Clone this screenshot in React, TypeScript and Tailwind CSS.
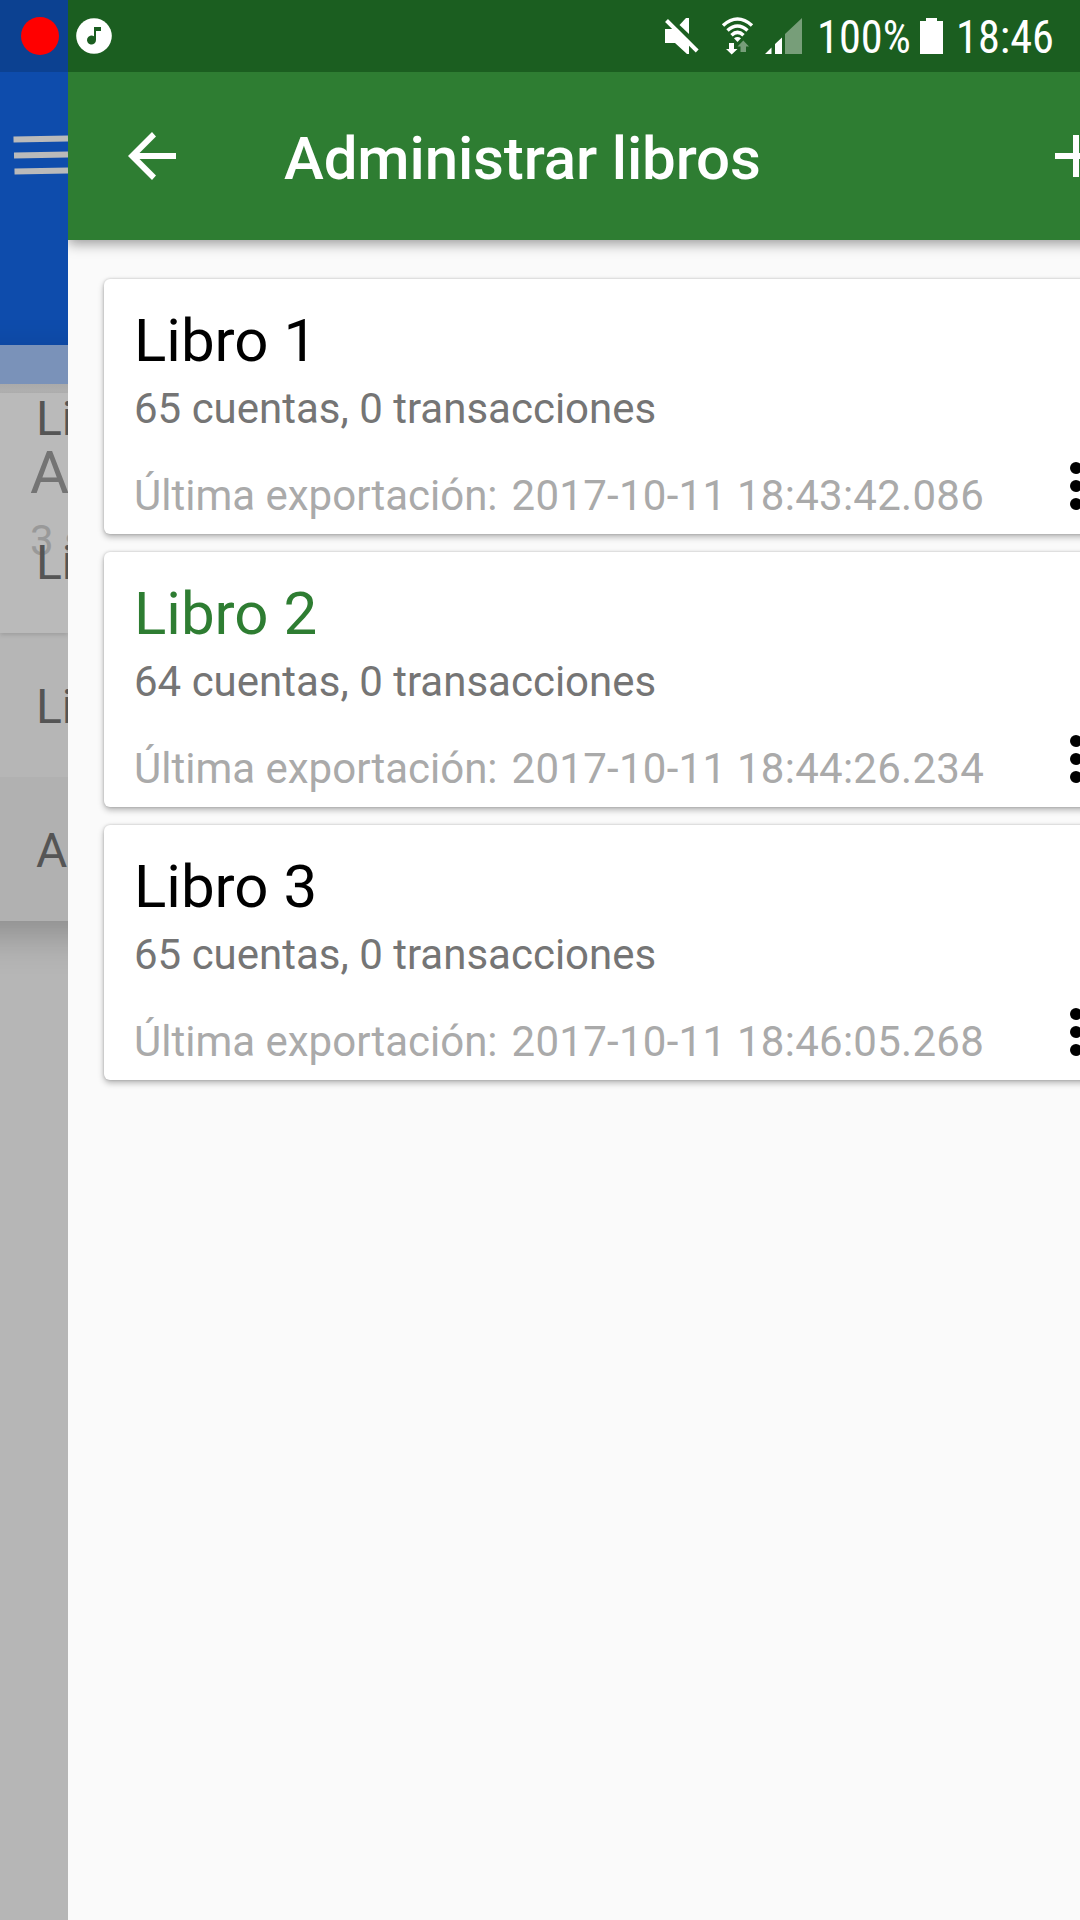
import React from 'react';

const books = [
  { name: 'Libro 1', count: '65 cuentas, 0 transacciones', date: '2017-10-11 18:43:42.086', active: false },
  { name: 'Libro 2', count: '64 cuentas, 0 transacciones', date: '2017-10-11 18:44:26.234', active: true },
  { name: 'Libro 3', count: '65 cuentas, 0 transacciones', date: '2017-10-11 18:46:05.268', active: false },
];

function MuteIcon() {
  return (
    <svg className="h-[72px] w-[50px] shrink-0" viewBox="0 0 50 72">
      <path d="M5 29H13L29 44.500V54H27L15 43H5z" fill="#fff" />
      <path d="M19.500 25L26 18H29V34z" fill="#fff" />
      <path d="M6.500 20.500L37.200 51" stroke="#fff" strokeWidth="4" />
    </svg>
  );
}

function WifiIcon() {
  return (
    <svg className="h-[72px] w-[40px] shrink-0" viewBox="0 0 40 72" fill="none">
      <g stroke="#fff" strokeWidth="3.5">
        <path d="M2 25.500Q16.500 12.500 31 25.500" />
        <path d="M6.500 30.500Q16.500 21.500 26.500 30.500" />
        <path d="M10.500 35.200Q16.500 29.500 22.500 35.200" />
      </g>
      <path d="M13 38.300Q16.500 35.800 20 38.300L16.500 42z" fill="#fff" />
      <path d="M8 43h5v6h3.500L10.700 54.500L5 49h3z" fill="#fff" />
      <path d="M19.500 52V46.500H16.500L22.300 40.500L28 46.500h-3V52z" fill="#779e79" />
    </svg>
  );
}

function SignalIcon() {
  return (
    <svg className="h-[72px] w-[40px] shrink-0" viewBox="0 0 40 72">
      <path d="M0 54L6.500 47.500V54zM10 54V44L17 37.500V54z" fill="#fff" />
      <path d="M20 54V34L37 18V54z" fill="#779e79" />
    </svg>
  );
}

function StatusBar() {
  return (
    <div className="flex h-[72px] w-full text-white">
      <div className="h-full w-[68px] bg-[#0c4191]">
        <div className="ml-[21px] mt-[17px] size-[38px] rounded-full bg-[#ff0000]" />
      </div>
      <div className="flex h-full flex-1 bg-[#1b5e20]">
        <svg className="ml-2 mt-[18px] size-9" viewBox="0 0 36 36">
          <circle cx="18" cy="18" r="17.800" fill="#fff" />
          <path d="M18 9h7v4h-5v9a4.500 4.500 0 1 1-2-3.700z" fill="#1b5e20" />
        </svg>
        <div className="ml-[548px] flex">
          <MuteIcon />
          <div className="ml-[11px] flex"><WifiIcon /></div>
          <div className="ml-[4px] flex"><SignalIcon /></div>
          <span className="ml-[12px] w-[92px] origin-left scale-x-[0.965] whitespace-nowrap text-[46px] leading-[74px] [font-stretch:75%]">100%</span>
          <svg className="ml-[10px] h-[72px] w-6 shrink-0" viewBox="0 0 24 72">
            <path d="M1 21H7V18H18V21H24V54H1z" fill="#fff" />
          </svg>
          <span className="ml-[13px] w-[100px] origin-left scale-x-[0.965] whitespace-nowrap text-[46px] leading-[74px] [font-stretch:75%]">18:46</span>
        </div>
      </div>
    </div>
  );
}

/* Strip of the previous screen, dimmed, with its open drop-down menu */
function PreviousScreen() {
  return (
    <div className="relative flex h-full w-[68px] shrink-0 flex-col overflow-hidden bg-[#b6b6b6]">
      <div className="h-[273px] shrink-0 bg-[#0e4cac]">
        <svg className="h-[120px] w-[68px]" viewBox="0 0 68 120" stroke="#bababa" strokeWidth="6">
          <path d="M13.500 67.500L68 66.500M14 83.500L68 82.500M14.500 99.500L68 98.500" />
        </svg>
      </div>
      <div className="h-[39px] shrink-0 bg-[#7a92b9]" />
      <div className="h-[9px] shrink-0 bg-gradient-to-b from-[#aaaaaa] to-[#b0b0b0]" />
      <div className="h-[240px] shrink-0 bg-[#bababa] pl-[30px] shadow-[0_2px_4px_#00000020]">
        <div className="mt-[40px] text-[60px] leading-[80px] text-[#747474] whitespace-nowrap">Activos</div>
        <div className="mt-[3px] whitespace-nowrap text-[42px] leading-[50px] text-[#999999]">3 subcuentas</div>
      </div>
      <div className="absolute left-[-60px] top-[273px] w-[520px] text-[48px] text-[#555] shadow-[0_14px_36px_#0000003a]">
        <div className="flex h-36 items-center whitespace-nowrap pl-[96px] pt-1">Libro 1</div>
        <div className="flex h-36 items-center whitespace-nowrap pl-[96px] pt-1">Libro 2</div>
        <div className="flex h-36 items-center whitespace-nowrap pl-[96px] pt-1">Libro 3</div>
        <div className="flex h-36 items-center whitespace-nowrap bg-[#b1b1b1] pl-[96px] pt-1">Administrar libros</div>
      </div>
    </div>
  );
}

function BookCard({ book }: { book: (typeof books)[number] }) {
  return (
    <div className="flex h-[255px] w-[1040px] shrink-0 rounded-[6px] bg-white pl-[30px] shadow-[0_3px_6px_#00000048,0_0_3px_#00000030]">
      <div className="w-[930px] shrink-0 whitespace-nowrap">
        <div className={book.active ? 'mt-[27px] text-[60px] leading-[70px] text-[#2e7d32]' : 'mt-[27px] text-[60px] leading-[70px] text-black'}>{book.name}</div>
        <div className="mt-[8px] text-[42px] leading-[50px] text-[#757575]">{book.count}</div>
        <div className="mt-[37px] flex gap-[14px] text-[42px] leading-[50px] text-[#aaaaaa]">
          <span>Última exportación:</span>
          <span className="tracking-[0.27px]">{book.date}</span>
        </div>
      </div>
      <div className="mt-[183px] ml-[6px] flex flex-col gap-[6px]">
        <div className="size-3 rounded-full bg-black" />
        <div className="size-3 rounded-full bg-black" />
        <div className="size-3 rounded-full bg-black" />
      </div>
    </div>
  );
}

export default function App() {
  return (
    <div className="flex h-[1920px] w-[1080px] flex-col overflow-hidden font-['Roboto',sans-serif]">
      <StatusBar />
      <div className="flex min-h-0 flex-1">
        <PreviousScreen />
        <div className="flex min-w-0 flex-1 flex-col overflow-hidden bg-[#fafafa]">
          <div className="flex h-[168px] w-[1080px] shrink-0 bg-[#2e7d32] text-white shadow-[0_4px_12px_#00000060]">
            <svg className="ml-[60px] mt-[60px] size-12 shrink-0" viewBox="0 0 48 48">
              <path d="M48 21H11.500L28 4.500L24 0L0 24L24 48L28 43.500L11.500 27H48z" fill="#fff" />
            </svg>
            <div className="ml-[108px] mt-[52px] w-[771px] shrink-0 text-[60px] font-medium leading-[70px] tracking-[-0.13px]">Administrar libros</div>
            <svg className="mt-[63px] size-[42px] shrink-0" viewBox="0 0 42 42">
              <path d="M0 18H18V0H24V18H42V24H24V42H18V24H0z" fill="#fff" />
            </svg>
          </div>
          <div className="flex flex-col gap-[18px] pl-9 pt-[39px]">
            {books.map((b) => (
              <BookCard key={b.name} book={b} />
            ))}
          </div>
        </div>
      </div>
    </div>
  );
}
